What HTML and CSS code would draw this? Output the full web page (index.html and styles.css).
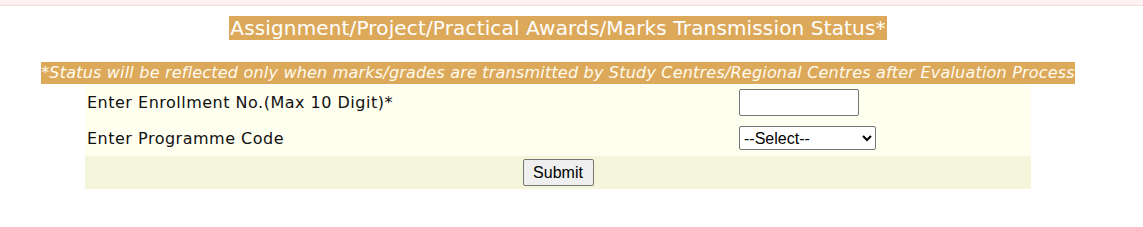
FILE: index.html
```html
<!DOCTYPE html>
<html lang="en">
<head>
  <meta charset="UTF-8" />
  <title>Awards/Marks Transmission Status</title>
  <link rel="stylesheet" href="styles.css">
</head>
<body>
  <div class="topbar"></div>
  <div class="page">
    <h2 class="title"><span>Assignment/Project/Practical Awards/Marks Transmission Status*</span></h2>
    <p class="note"><span>*Status will be reflected only when marks/grades are transmitted by Study Centres/Regional Centres after Evaluation Process</span></p>
    <form class="status-form" onsubmit="return false;">
      <table class="form-table">
        <tr class="row-enrol">
          <td class="label">Enter Enrollment No.(Max 10 Digit)*</td>
          <td class="field"><input type="text" class="enrol-input" maxlength="10"></td>
        </tr>
        <tr class="row-prog">
          <td class="label">Enter Programme Code</td>
          <td class="field">
            <select class="prog-select">
              <option>--Select--</option>
            </select>
          </td>
        </tr>
        <tr class="row-submit">
          <td colspan="2" class="submit-cell"><input type="submit" value="Submit" class="submit-btn"></td>
        </tr>
      </table>
    </form>
  </div>
</body>
</html>
```

FILE: styles.css
```css
body {
  margin: 0;
  padding: 0;
  background: #fff;
  font-family: "DejaVu Sans", Verdana, sans-serif;
  color: #000;
}
.topbar {
  height: 5px;
  background: #fff2f2;
  border-bottom: 1px solid #f0dcdc;
}
.page {
  width: 1116px;
}
.title {
  margin: 10px 0 0;
  text-align: center;
  font-weight: normal;
  font-size: 20px;
  line-height: 24px;
  letter-spacing: 0.15px;
}
.title span {
  display: inline-block;
  background: #dca95b;
  color: #fff;
  padding: 0 1px;
}
.note {
  margin: 22px 0 0;
  text-align: center;
  font-size: 16px;
  line-height: 22px;
  letter-spacing: 0.2px;
}
.note span {
  display: inline-block;
  background: #dca95b;
  color: #fffbee;
  font-style: italic;
}
.status-form {
  margin: 1px 0 0;
}
.form-table {
  width: 946px;
  margin: 0 auto;
  border-collapse: collapse;
  font-size: 16px;
  letter-spacing: 0.5px;
}
.form-table td {
  padding: 0;
}
.row-enrol,
.row-prog {
  background: #fffff0;
}
.row-enrol {
  height: 35px;
}
.row-prog {
  height: 36px;
}
.row-submit {
  background: #f5f5dc;
  height: 33px;
}
.label {
  width: 652px;
  padding-left: 2px !important;
  color: #111;
}
.field {
  vertical-align: middle;
  letter-spacing: normal;
}
.enrol-input {
  box-sizing: border-box;
  width: 120px;
  height: 27px;
  margin: 0;
  border: 1px solid #767676;
  border-radius: 2px;
  font-family: "Liberation Sans", Arial, sans-serif;
  font-size: 16px;
}
.prog-select {
  box-sizing: border-box;
  width: 137px;
  height: 24px;
  margin: 0;
  border: 1px solid #767676;
  border-radius: 2px;
  background: #fff;
  font-family: "Liberation Sans", Arial, sans-serif;
  font-size: 16px;
  color: #000;
}
.submit-cell {
  text-align: center;
  letter-spacing: normal;
}
.submit-btn {
  box-sizing: border-box;
  width: 71px;
  height: 27px;
  margin: 0;
  border: 1px solid #767676;
  border-radius: 2px;
  background: #efefef;
  font-family: "Liberation Sans", Arial, sans-serif;
  font-size: 16px;
  color: #000;
}
```
